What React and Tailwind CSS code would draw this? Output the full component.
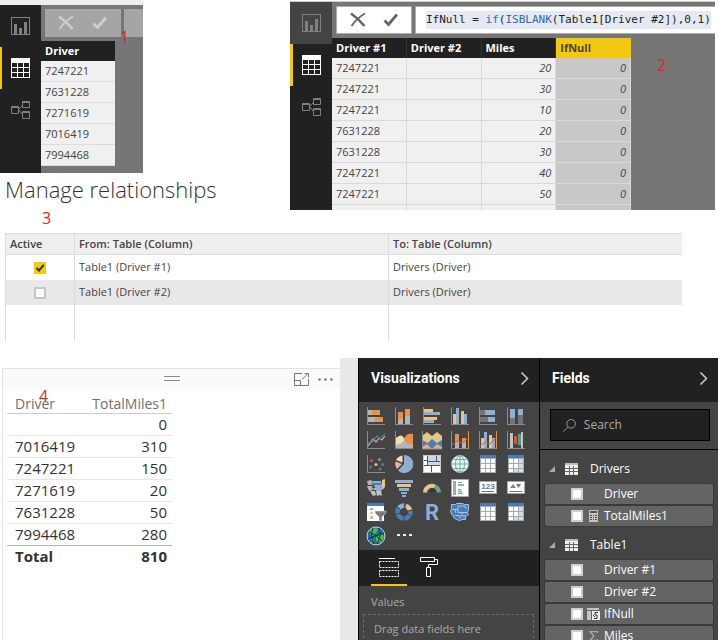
import React from "react";

const ORANGE = "#e8914a";
const BLUE = "#8faed2";
const DEEP = "#4a7db5";
const SAND = "#e9c583";
const GREY = "#b4b4b4";
const AXIS = "#8c8c8c";

/* ---------- navigation rail ---------- */

function ChartGlyph() {
  return (
    <svg width="19" height="18" viewBox="0 0 19 18" fill="none">
      <rect x="0.5" y="0.5" width="18" height="17" stroke="#808080" />
      <path d="M3 7h3v10H3zM8 11h3v6H8zM13 5h3v12h-3z" fill="#808080" />
    </svg>
  );
}

function GridGlyph() {
  return (
    <svg width="19" height="20" viewBox="0 0 19 20">
      <path d="M0 0h19v20H0z" fill="#fff" />
      <path
        d="M1 5h5v4H1zM7 5h5v4H7zM13 5h5v4h-5zM1 10h5v4H1zM7 10h5v4H7zM13 10h5v4h-5zM1 15h5v4H1zM7 15h5v4H7zM13 15h5v4h-5z"
        fill="#212121"
      />
    </svg>
  );
}

function ModelGlyph() {
  return (
    <svg width="19" height="18" viewBox="0 0 19 18" fill="none" stroke="#808080">
      <path d="M0.5 5.5h7v7h-7zM11.5 0.5h7v6h-7zM11.5 10.5h7v7h-7z" />
      <path d="M0.5 6.5h7M11.5 1.5h7M11.5 11.5h7" />
      <path d="M8 8l3-3M8 9l3 4" />
    </svg>
  );
}

function Rail({ shaded }) {
  const base = shaded
    ? "flex h-[42px] w-full items-center border-l-[3px] pl-[9px]"
    : "flex h-[42px] w-full items-center border-l-2 pl-[9px]";
  return (
    <nav
      className={
        shaded
          ? "flex w-[42px] shrink-0 flex-col bg-[#212121]"
          : "flex w-[41px] shrink-0 flex-col bg-[#212121]"
      }
    >
      <button
        aria-label="Report"
        className={shaded ? `${base} border-[#444] bg-[#444]` : `${base} border-transparent`}
      >
        <ChartGlyph />
      </button>
      <button aria-label="Data" className={`${base} border-[#f2c811]`}>
        <GridGlyph />
      </button>
      <button aria-label="Model" className={`${base} border-transparent`}>
        <ModelGlyph />
      </button>
    </nav>
  );
}

function CancelCommit({ color }) {
  return (
    <>
      <button aria-label="Cancel">
        <svg width="16" height="16" viewBox="0 0 16 16" stroke={color} fill="none">
          <path d="M1 1.5Q9 7 14.500 14" strokeWidth="2.600" />
          <path d="M15 1.500Q7 6 1.500 14" strokeWidth="2" />
        </svg>
      </button>
      <button aria-label="Commit">
        <svg width="16" height="16" viewBox="0 0 16 16" stroke={color} fill="none">
          <path d="M1.500 8.500l4 4L14 2.500" strokeWidth="2.800" />
        </svg>
      </button>
    </>
  );
}

function Note({ children, className = "" }) {
  return (
    <span className={`text-[16px] leading-5 text-[#e01f2b] ${className}`}>{children}</span>
  );
}

/* ---------- data views ---------- */

function DriversView() {
  const drivers = ["7247221", "7631228", "7271619", "7016419", "7994468"];
  return (
    <section className="w-[143px] border-t-[5px] border-[#eee]">
      <div className="flex">
        <Rail />
        <div className="relative min-w-0 flex-1 overflow-hidden bg-[#767676] pb-[7px]">
          <div className="flex h-9 gap-[3px] pt-1 pl-1">
            <div className="flex h-7 w-[76px] shrink-0 items-center justify-around bg-[#a5a5a5] px-1">
              <CancelCommit color="#cfcfcf" />
            </div>
            <div className="h-7 flex-1 bg-[#a5a5a5]" />
          </div>
          <table className="w-[74px] border-separate border-spacing-0 text-[11px] text-[#444]">
            <thead>
              <tr className="h-5 bg-[#212121] text-left text-white">
                <th className="p-0 pl-1 leading-5 font-bold">Driver</th>
              </tr>
            </thead>
            <tbody>
              {drivers.map((d) => (
                <tr key={d} className="h-[21px] bg-[#f0f0f0]">
                  <td className="border-b border-[#dcdcdc] p-0 pl-1 leading-5">{d}</td>
                </tr>
              ))}
            </tbody>
          </table>
          <Note className="absolute top-[22px] left-[79px]">1</Note>
        </div>
      </div>
    </section>
  );
}

function TableView() {
  const rows = [
    ["7247221", 20],
    ["7247221", 30],
    ["7247221", 10],
    ["7631228", 20],
    ["7631228", 30],
    ["7247221", 40],
    ["7247221", 50],
  ];
  const cell = "border-r border-b border-[#d9d9d9] p-0 px-1 leading-5";
  const head = "border-r border-[#333] p-0 px-1 leading-5 font-bold";
  return (
    <section className="mt-px mr-1 ml-[147px] flex h-[209px] min-w-0 flex-1 overflow-hidden border-t border-[#ccc]">
      <Rail shaded />
      <div className="relative min-w-0 flex-1 bg-[#767676]">
        <div className="flex h-9 gap-[3px] pt-1 pl-1">
          <div className="flex h-7 w-[76px] shrink-0 items-center justify-around border border-[#aaa] bg-white px-1">
            <CancelCommit color="#666" />
          </div>
          <div className="flex h-7 min-w-0 flex-1 items-center border border-r-0 border-[#aaa] bg-white pl-[10px]">
            <code className="bg-[#e5eaf2] font-['DejaVu_Sans_Mono','Liberation_Mono',monospace] text-[11px] leading-[18px] whitespace-pre text-[#222]">
              IfNull = <span className="text-[#3165bb]">if</span>(
              <span className="text-[#3165bb]">ISBLANK</span>(Table1[Driver #2]),0,1)
            </code>
          </div>
        </div>
        <table className="w-[299px] table-fixed border-separate border-spacing-0 text-[11px] text-[#444]">
          <thead>
            <tr className="h-5 bg-[#212121] text-left text-white">
              <th className={head}>Driver #1</th>
              <th className={head}>Driver #2</th>
              <th className={head}>Miles</th>
              <th className="bg-[#f2c811] p-0 px-1 leading-5 font-bold text-[#4d4310]">IfNull</th>
            </tr>
          </thead>
          <tbody>
            {rows.map(([driver, miles], i) => (
              <tr key={i} className="h-[21px] bg-[#f0f0f0]">
                <td className={cell}>{driver}</td>
                <td className={cell} />
                <td className={`${cell} text-right italic`}>{miles}</td>
                <td className={`${cell} bg-[#c8c8c8] text-right italic`}>0</td>
              </tr>
            ))}
            <tr className="h-[21px] bg-[#f0f0f0]">
              <td className={cell} />
              <td className={cell} />
              <td className={cell} />
              <td className={`${cell} bg-[#c8c8c8]`} />
            </tr>
          </tbody>
        </table>
        <Note className="absolute top-[53px] left-[325px]">2</Note>
      </div>
    </section>
  );
}

/* ---------- relationships ---------- */

function Relationships() {
  const rows = [
    { from: "Table1 (Driver #1)", to: "Drivers (Driver)", on: true },
    { from: "Table1 (Driver #2)", to: "Drivers (Driver)", on: false },
  ];
  const edge = "border-l border-[#dcdcdc]";
  return (
    <div className="mr-[37px] ml-[5px]">
      <table className="w-full table-fixed border-separate border-spacing-0 text-left text-[11px] text-[#444]">
        <colgroup>
          <col className="w-[69px]" />
          <col className="w-[314px]" />
          <col />
        </colgroup>
        <thead>
          <tr className="h-[22px] bg-[#efefef]">
            {["Active", "From: Table (Column)", "To: Table (Column)"].map((t) => (
              <th key={t} className={`${edge} border-y p-0 pl-1 leading-5 font-semibold`}>
                {t}
              </th>
            ))}
          </tr>
        </thead>
        <tbody>
          {rows.map((r) => (
            <tr key={r.from} className={r.on ? "h-[25px]" : "h-[25px] bg-[#e8e8e8]"}>
              <td className={`${edge} p-0`}>
                <span className="relative mx-auto block size-3">
                  <input
                    type="checkbox"
                    defaultChecked={r.on}
                    aria-label={r.from}
                    className="block size-3 appearance-none border-2 border-[#c6c6c6] bg-white checked:border-[#f2c811] checked:bg-[#f2c811]"
                  />
                  {r.on && (
                    <svg
                      className="pointer-events-none absolute inset-0"
                      width="12"
                      height="12"
                      viewBox="0 0 12 12"
                      fill="none"
                      stroke="#3a3210"
                      strokeWidth="2"
                    >
                      <path d="M2.500 6l2.500 2.500L9.800 2.800" />
                    </svg>
                  )}
                </span>
              </td>
              <td className={`${edge} p-0 pl-1`}>{r.from}</td>
              <td className={`${edge} p-0 pl-1`}>{r.to}</td>
            </tr>
          ))}
          <tr className="h-9">
            <td className={edge} />
            <td className={edge} />
            <td className={edge} />
          </tr>
        </tbody>
      </table>
    </div>
  );
}

/* ---------- report canvas ---------- */

function MilesCard() {
  const rows = [
    ["", "0"],
    ["7016419", "310"],
    ["7247221", "150"],
    ["7271619", "20"],
    ["7631228", "50"],
    ["7994468", "280"],
  ];
  return (
    <section className="mt-[10px] ml-0.5 min-w-0 flex-1 border-t border-l border-[#e2e2e2]">
      <header className="relative flex h-5 items-center justify-end gap-[9px] bg-[#fafafa] pr-[7px]">
        <svg
          className="absolute top-[7px] left-1/2 -ml-2"
          width="16"
          height="5"
          viewBox="0 0 16 5"
          stroke="#8a8a8a"
        >
          <path d="M0 0.500h16M0 4.500h16" />
        </svg>
        <button aria-label="Focus mode">
          <svg width="15" height="13" viewBox="0 0 15 13" fill="none" stroke="#777">
            <path d="M8 0.500H0.500v12h14V6M0.500 7.500h6v5M8 6.500l6-6M10.500 0.500h4v4" />
          </svg>
        </button>
        <button aria-label="More options">
          <svg width="15" height="3" viewBox="0 0 15 3" fill="#777">
            <circle cx="1.500" cy="1.500" r="1.300" />
            <circle cx="7.500" cy="1.500" r="1.300" />
            <circle cx="13.500" cy="1.500" r="1.300" />
          </svg>
        </button>
      </header>
      <div className="relative pt-[5px] pl-1">
        <Note className="absolute top-[-3px] left-9">4</Note>
        <table className="w-[165px] border-separate border-spacing-0 text-[15px] text-[#333]">
          <thead>
            <tr className="h-5 text-[14px] text-[#707070]">
              <th className="border-b border-[#ccc] p-0 pl-2 text-left leading-[19px] font-normal">
                Driver
              </th>
              <th className="border-b border-[#ccc] p-0 pr-[5px] text-right leading-[19px] font-normal">
                TotalMiles1
              </th>
            </tr>
          </thead>
          <tbody>
            {rows.map(([driver, miles], i) => {
              const line =
                i === rows.length - 1 ? "border-b border-[#b5b5b5]" : "border-b border-[#e6e6e6]";
              return (
                <tr key={i} className="h-[22px]">
                  <td className={`${line} p-0 pl-2 leading-[21px]`}>{driver}</td>
                  <td className={`${line} p-0 pr-[5px] text-right leading-[21px]`}>{miles}</td>
                </tr>
              );
            })}
          </tbody>
          <tfoot>
            <tr className="font-bold">
              <td className="p-0 pl-2 leading-[21px]">Total</td>
              <td className="p-0 pr-[5px] text-right leading-[21px]">810</td>
            </tr>
          </tfoot>
        </table>
      </div>
    </section>
  );
}

/* ---------- visual gallery ---------- */

const axes = <path d="M0.500 0v17.500H18" stroke={AXIS} fill="none" />;

const table = (tint) => (
  <>
    <path d="M1 0h16v18H1z" fill="#aaa" />
    <path d="M1 0h16v3H1z" fill={DEEP} />
    <path d="M2 4h4v4H2zM7 4h4v4H7zM12 4h4v4h-4zM2 9h4v4H2zM7 9h4v4H7zM12 9h4v4h-4zM2 14h4v3H2zM7 14h4v3H7zM12 14h4v3h-4z" fill="#fff" />
    {tint && <path d="M12 4h4v4h-4zM12 9h4v4h-4zM12 14h4v3h-4zM7 14h4v3H7z" fill="#cfdcec" />}
  </>
);

const visuals = [
  ["Stacked bar chart", <>{axes}<path d="M1 3h4v5H1zM1 10h7v5H1z" fill={GREY} /><path d="M5 3h8v5H5zM8 10h8v5H8z" fill={ORANGE} /></>],
  ["Stacked column chart", <>{axes}<path d="M3 12h5v5H3zM10 9h5v8h-5z" fill={GREY} /><path d="M3 5h5v7H3zM10 2h5v7h-5z" fill={ORANGE} /></>],
  ["Clustered bar chart", <>{axes}<path d="M1 2h9v3H1zM1 10h13v3H1z" fill={SAND} /><path d="M1 5h16v3H1zM1 13h10v3H1z" fill={BLUE} /></>],
  ["Clustered column chart", <>{axes}<path d="M2 7h3v10H2zM10 4h3v13h-3z" fill={SAND} /><path d="M5 1h3v16H5zM13 7h3v10h-3z" fill={BLUE} /></>],
  ["100% stacked bar chart", <>{axes}<path d="M1 3h5v5H1zM1 10h8v5H1z" fill="#757575" /><path d="M6 3h10v5H6zM9 10h7v5H9z" fill={BLUE} /></>],
  ["100% stacked column chart", <>{axes}<path d="M3 11h5v6H3zM11 8h5v9h-5z" fill="#757575" /><path d="M3 2h5v9H3zM11 2h5v6h-5z" fill={BLUE} /></>],

  ["Line chart", <>{axes}<path d="M1 15l5-7 3 3 3-4 3 2 3-4" stroke="#e3a79a" strokeWidth="1.200" fill="none" /><path d="M1 12l4-1 5-6 3 3 5-5" stroke={DEEP} strokeWidth="1.200" fill="none" /></>],
  ["Area chart", <>{axes}<path d="M1 17V7l5-3 4 4 5-5 3 1v13z" fill={GREY} /><path d="M1 7l3-2h3l3 3-3 4-6 2z" fill="#f2dcb4" /><path d="M9 8q2-6 9-5v11q-7-1-9-6z" fill={ORANGE} /></>],
  ["Stacked area chart", <><path d="M-1 18V5l5-4 5 4 5-4 5 4v13z" fill={SAND} /><path d="M-1 9l6 3 4-4 5 4 5-3v9H-1z" fill={DEEP} /><path d="M-1 16l5-3 5 5 5-5 5 3v2H-1z" fill="#e9aa84" /><path d="M-0.500 0v18M-1 18h20" stroke={AXIS} /></>],
  ["Line and stacked column chart", <>{axes}<path d="M4 3h4v7H4zM11 7h4v4h-4z" fill={ORANGE} /><path d="M4 10h4v7H4zM11 11h4v6h-4z" fill={GREY} /><path d="M1 14l5-4 5 2 6-4" stroke="#d4573b" fill="none" /><path d="M17.500 0v18" stroke={ORANGE} /></>],
  ["Line and clustered column chart", <>{axes}<path d="M2 7h3v10H2zM10 4h3v13h-3z" fill={SAND} /><path d="M5 1h3v16H5zM13 7h3v10h-3z" fill={BLUE} /><path d="M1 15l6-4 4 2 6-6" stroke="#d4573b" fill="none" /><path d="M17.500 0v18" stroke={ORANGE} /></>],
  ["Waterfall chart", <>{axes}<path d="M3 2h3v15H3zM14 1h2v16h-2z" fill="#c4c4c4" /><path d="M6 1h1v8H6z" fill="#333" /><path d="M7 5h3v8H7z" fill="#d4573b" /><path d="M11 3h3v11h-3z" fill="#5e9c82" /></>],

  ["Scatter chart", <>{axes}<circle cx="4.500" cy="5.500" r="1.500" fill="#d4573b" /><circle cx="12.500" cy="4.500" r="1.500" fill="#6fa58f" /><circle cx="9" cy="9.500" r="1.500" fill={SAND} /><circle cx="3.500" cy="12" r="1.500" fill={DEEP} /><circle cx="15.500" cy="9.500" r="1.500" fill={DEEP} /><circle cx="13" cy="14" r="1.500" fill="#777" /></>],
  ["Pie chart", <><path d="M9 9V0a9 9 0 1 1-6 15.500z" fill={BLUE} /><path d="M7.500 7.500V0.500A9 9 0 0 0 1 5z" fill="#f2dcb4" /><path d="M7 9L0.500 6.500A9 9 0 0 0 2 14z" fill="#e9b3a0" /></>],
  ["Treemap", <><path d="M0 0h18v18H0z" fill="#fff" /><path d="M5 1h8v4H5zM5 5h9v5H5zM14 1h3v9h-3z" fill="#c9d8ea" /><path d="M4.500 0v10M13.500 0v6M0 10.500h18M8.500 10v8M0 5.500h4M5 6.500h13" stroke="#555" /><path d="M0.500 0.500h17v17H0.500z" fill="none" stroke="#c8c8c8" /></>],
  ["Map", <><circle cx="9" cy="9" r="8.500" fill="#f4f8fa" stroke="#92bfe0" /><path d="M9 1v16M1 9h16M3 4.500h12M3 13.500h12" stroke="#6bab9e" fill="none" /><ellipse cx="9" cy="9" rx="4.500" ry="8" fill="none" stroke="#6bab9e" /></>],
  ["Table", table(false)],
  ["Matrix", table(true)],

  ["Filled map", <><path d="M0 2l4-1 2 3-2 2H1zM0 7h5l1 4-4 1zM6 9h5v2H7z" fill={GREY} /><path d="M3 12h5l1 4-3 1zM9 12h5l1 5-2-1-3 1z" fill="#c4c4c4" /><path d="M5 2h9l1 3-2 3H7L5 6z" fill={DEEP} /><path d="M5 2h9v2H6z" fill={BLUE} /><path d="M8 6h6v2l3 1-3 3H9l1-3H8z" fill={BLUE} /><path d="M15 1l3-1v8l-2 2-2-3 1-3z" fill={SAND} /></>],
  ["Funnel", <><path d="M0 1h18v3H0zM4 9h10v3H4zM6 13h6v2H6zM7 16h4v2H7z" fill={BLUE} /><path d="M2 5h14v3H2z" fill={SAND} /></>],
  ["Gauge", <><path d="M2 13.500a7 7 0 0 1 10-6" stroke={SAND} strokeWidth="4" fill="none" /><path d="M12 7.500a7 7 0 0 1 4 6" stroke="#6fa58f" strokeWidth="4" fill="none" /><path d="M5 13l6-4 1 4z" fill="#333" /></>],
  ["Multi-row card", <><path d="M0.500 0.500h17v17H0.500z" fill="#fff" stroke="#aaa" /><path d="M2 2h3v14H2z" fill="#a5a5a5" /><path d="M7 3.500h4M7 10.500h3M7 14.500h5" stroke="#999" /><path d="M7 6h6M7 12.500h4" stroke={BLUE} strokeWidth="2" /></>],
  ["Card", <><path d="M0.500 2.500h17v12H0.500z" fill="#fff" stroke="#aaa" /><text x="9" y="10" textAnchor="middle" fontSize="8" fontWeight="700" fontFamily="Liberation Sans, sans-serif" fill={DEEP}>123</text><path d="M3 12.500h12" stroke="#777" /></>],
  ["KPI", <><path d="M0.500 2.500h17v12H0.500z" fill="#fff" stroke="#aaa" /><path d="M3 9l3-4 3 4z" fill="#5e9c82" /><path d="M9 5h5l-2.500 4z" fill="#d4573b" /><path d="M3 12.500h12" stroke="#777" /></>],

  ["Slicer", <><path d="M0 0h17v18H0z" fill="#fff" /><path d="M0 0h17v3H0z" fill={DEEP} /><path d="M3 5h3v2H3z" fill={BLUE} /><path d="M3 9h3v2H3z" fill={SAND} /><path d="M3 13h3v3H3z" fill="#e9b3a0" /><path d="M8 8h11v2l-4 4v4h-3v-4l-4-4z" fill="#7b7b7b" stroke="#eee" strokeWidth="0.500" /></>],
  ["Donut chart", <><circle cx="9" cy="9" r="6.500" fill="none" stroke={DEEP} strokeWidth="4.500" /><path d="M4 5a6.500 6.500 0 0 1 5-2.500" stroke={BLUE} strokeWidth="4.500" fill="none" /><path d="M11 3a6.500 6.500 0 0 1 4 4" stroke={SAND} strokeWidth="4.500" fill="none" /><path d="M9 0l1 5M18 7l-5 1M1 3l4 3M0 12l5-2M9 18v-5M17 14l-4-3" stroke="#444" /></>],
  ["R script visual", <text x="9" y="17" textAnchor="middle" fontSize="22" fontWeight="700" fontFamily="Roboto, sans-serif" fill={BLUE}>R</text>],
  ["Shape map", <><path d="M0.500 1.500h4l1-1h6l2 1h4v5l-1 3 1 2-3 2v3h-3l-3 1-3-1-3-2v-2l-2-1-1-4 1-2z" fill={DEEP} stroke="#a9c6e6" /><path d="M1 6.500h6v3h9M7 6V3h7l1 3M4 12.500h5v3M11 9v4h4M4 7l1 3" stroke="#a9c6e6" fill="none" /></>],
  ["Table grid", table(false)],
  ["Matrix grid", table(true)],

  ["ArcGIS map", <><circle cx="9" cy="9" r="9" fill="#1d6fb0" stroke="#cfd8d4" /><path d="M2 5l4-4 5 1-2 4-4 3zM9 9l6-2 2 4-4 5-4-2zM3 11l4 1-1 4z" fill="#56b848" /><path d="M1 12Q8 9 17 6M2 5q7 2 13 9M6 1q-3 8 1 16M12 1q3 8-2 16" stroke="#103a2c" fill="none" /></>],
  ["Import visual", <path d="M2 7h3v2H2zM8 7h3v2H8zM14 7h3v2h-3z" fill="#eee" />],
];

function PaneHeader({ title }) {
  return (
    <header className="flex h-11 items-center justify-between bg-[#212121] pr-[10px] pb-1 pl-3">
      <h2 className="font-[Roboto,sans-serif] text-[14px] leading-5 font-bold text-white">{title}</h2>
      <button aria-label={`Collapse ${title}`}>
        <svg width="9" height="13" viewBox="0 0 9 13" fill="none" stroke="#ccc" strokeWidth="1.500">
          <path d="M1.500 0.500L7.500 6.500L1.500 12.500" />
        </svg>
      </button>
    </header>
  );
}

function Visualizations() {
  return (
    <aside className="w-[182px] shrink-0 border-x border-black bg-[#444]">
      <PaneHeader title="Visualizations" />
      <div className="grid grid-cols-[repeat(6,28px)] gap-y-[6px] pt-[5px] pb-[5px] pl-2">
        {visuals.map(([name, art]) => (
          <button key={name} aria-label={name} className="size-[18px]">
            <svg width="18" height="18" viewBox="0 0 18 18" overflow="visible">
              {art}
            </svg>
          </button>
        ))}
      </div>
      <div className="flex h-9 gap-1 bg-[#212121] pl-3">
        <button
          aria-label="Fields"
          className="flex w-9 items-center justify-center border-b-2 border-[#f2c811]"
        >
          <svg width="20" height="19" viewBox="0 0 20 19" fill="none" stroke="#fff">
            <path d="M0 0.500h16" />
            <path d="M0.500 3.500h19v6h-19zM0.500 12.500h19v6h-19z" strokeDasharray="2 1" />
          </svg>
        </button>
        <button aria-label="Format" className="flex w-9 items-center justify-center pb-0.5">
          <svg width="18" height="20" viewBox="0 0 18 20" fill="none" stroke="#fff">
            <path d="M0.500 0.500h14v4h-14zM14.500 2.500h3v5h-9v3M6.500 10.500h4v9h-4z" />
          </svg>
        </button>
      </div>
      <div className="pt-1 pr-[5px] pl-1 text-[11px] text-[#ababab]">
        <h3 className="pl-2 leading-6">Values</h3>
        <div className="h-10 border border-dashed border-[#6c6c6c] pl-[10px] leading-[28px]">
          Drag data fields here
        </div>
      </div>
    </aside>
  );
}

/* ---------- field list ---------- */

const markers = {
  measure: (
    <svg width="9" height="12" viewBox="0 0 9 12">
      <path d="M0 0h9v12H0z" fill="#c4c4c4" />
      <path d="M1 1h7v2H1zM1 5h2v1H1zM4 5h1v1H4zM6 5h2v1H6zM1 7h2v1H1zM4 7h1v1H4zM6 7h2v1H6zM1 9h2v1H1zM4 9h1v1H4zM6 9h2v1H6z" fill="#555" />
    </svg>
  ),
  column: (
    <svg width="13" height="12" viewBox="0 0 13 12">
      <path d="M0 0h12v2H0zM0 3h4v9H0z" fill="#c4c4c4" />
      <path d="M5 3h8v9H5z" fill="#eee" />
      <path d="M11 4.500H8v2.500h2v3.500H7M6 7l2 2" stroke="#333" fill="none" />
    </svg>
  ),
  sum: (
    <svg width="9" height="10" viewBox="0 0 9 10" fill="none" stroke="#aaa" strokeWidth="1.300">
      <path d="M8.500 2V0.700H1L5 5L1 9.300h7.500V8" />
    </svg>
  ),
};

function FieldGroup({ name, fields }) {
  return (
    <section>
      <h3 className="flex h-[34px] items-center pt-1 pl-[9px] text-[12px] text-white">
        <svg width="6" height="6" viewBox="0 0 6 6" className="mr-[10px]">
          <path d="M6 0v6H0z" fill="#aaa" />
        </svg>
        <svg width="13" height="12" viewBox="0 0 13 12" className="mr-3">
          <path d="M0 0h13v12H0z" fill="#eee" />
          <path d="M0 0h13v2H0z" fill="#bbb" />
          <path d="M4.500 3v9M8.500 3v9M0 5.500h13M0 8.500h13" stroke="#666" />
        </svg>
        {name}
      </h3>
      <ul className="flex flex-col gap-0.5 px-[5px]">
        {fields.map(([label, kind]) => (
          <li key={label}>
            <label className="flex h-5 items-center rounded-[2px] bg-[#646464] pl-[26px] text-[12px] text-white shadow-[0_0_0_1px_#3a3a3a]">
              <input
                type="checkbox"
                className="block size-3 shrink-0 appearance-none border-2 border-[#cfcfcf] bg-white"
              />
              <span className="flex w-[21px] justify-center">{kind && markers[kind]}</span>
              {label}
            </label>
          </li>
        ))}
      </ul>
    </section>
  );
}

function Fields() {
  return (
    <aside className="mr-px w-[178px] shrink-0 bg-[#444]">
      <PaneHeader title="Fields" />
      <div className="border-b border-black pt-[7px] pr-2 pb-2 pl-[10px]">
        <label className="flex h-8 items-center border border-black bg-[#212121] pl-3">
          <svg width="15" height="15" viewBox="0 0 15 15" fill="none" stroke="#aaa">
            <circle cx="9.500" cy="5.500" r="5" />
            <path d="M6 9L0.500 14.500" />
          </svg>
          <input
            type="text"
            placeholder="Search"
            aria-label="Search"
            className="ml-2 w-full min-w-0 bg-transparent text-[12px] text-white outline-none placeholder:text-[#aaa]"
          />
        </label>
      </div>
      <FieldGroup name="Drivers" fields={[["Driver"], ["TotalMiles1", "measure"]]} />
      <FieldGroup
        name="Table1"
        fields={[["Driver #1"], ["Driver #2"], ["IfNull", "column"], ["Miles", "sum"]]}
      />
    </aside>
  );
}

export default function App() {
  return (
    <main className="flex h-screen flex-col overflow-hidden bg-white font-['Open_Sans','Noto_Sans',sans-serif]">
      <div className="flex items-start">
        <div className="w-[143px] shrink-0">
          <DriversView />
          <h1 className="pl-[5px] text-[22px] leading-8 font-light whitespace-nowrap text-[#333]">
            Manage relationships
          </h1>
          <p className="flex h-7 items-center pb-0.5 pl-[42px]">
            <Note>3</Note>
          </p>
        </div>
        <TableView />
      </div>
      <Relationships />
      <div className="mt-[17px] flex min-h-0 flex-1">
        <MilesCard />
        <div className="w-[18px] shrink-0 bg-[#e8e8e8]" />
        <Visualizations />
        <Fields />
      </div>
    </main>
  );
}
